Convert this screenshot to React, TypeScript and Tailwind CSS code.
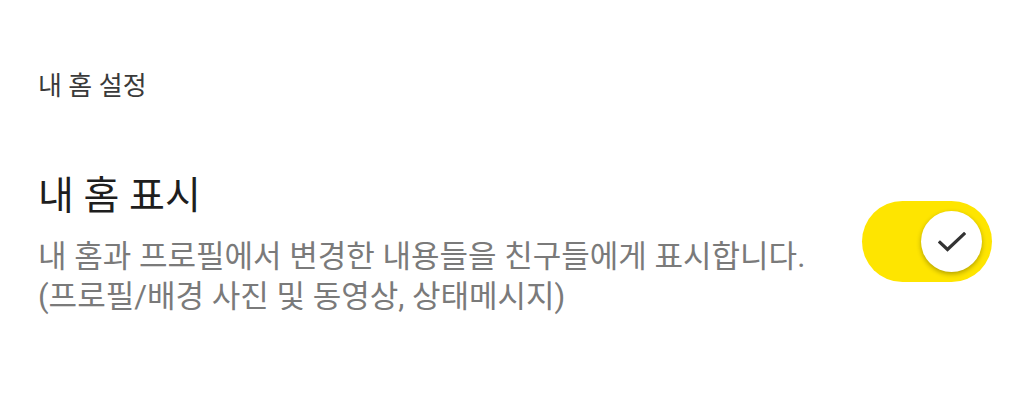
import React, { useState } from "react";

const Toggle: React.FC<{ on: boolean; onChange: () => void }> = ({ on, onChange }) => {
    return (
        <button
            type="button"
            onClick={onChange}
            className={`relative flex h-[81px] w-[130px] shrink-0 items-center rounded-full px-[10px] ${
                on ? "justify-end bg-[#fee500]" : "justify-start bg-[#d9d9d9]"
            }`}
        >
            <span className="flex h-[61px] w-[61px] items-center justify-center rounded-full bg-white shadow-[0_2px_5px_rgba(0,0,0,0.3)]">
                {on && (
                    <svg width="28" height="20" viewBox="0 0 28 20" fill="none">
                        <path
                            d="M2 10.5 L9.5 17.5 L26 2"
                            stroke="#333333"
                            strokeWidth="3.2"
                            strokeLinecap="square"
                            strokeLinejoin="miter"
                        />
                    </svg>
                )}
            </span>
        </button>
    );
};

export default function App() {
    const [showHome, setShowHome] = useState(true);

    return (
        <div className="min-h-[420px] w-full bg-white pl-[38px] pr-[30px] pt-[68px] font-['Roboto','Noto_Sans_CJK_KR',sans-serif]">
            <h2 className="text-[26px] leading-[36px] text-[#3a3a3a]">내 홈 설정</h2>

            <div className="mt-[68px] flex items-center justify-between">
                <div>
                    <div className="text-[39px] leading-[48px] text-[#1e1e1e]">내 홈 표시</div>
                    <p className="mt-[17px] text-[31px] leading-[40px] text-[#7a7a7a]">
                        내 홈과 프로필에서 변경한 내용들을 친구들에게 표시합니다.
                        <br />
                        (프로필/배경 사진 및 동영상, 상태메시지)
                    </p>
                </div>
                <div className="-mt-[6px]">
                    <Toggle on={showHome} onChange={() => setShowHome(!showHome)} />
                </div>
            </div>
        </div>
    );
}
